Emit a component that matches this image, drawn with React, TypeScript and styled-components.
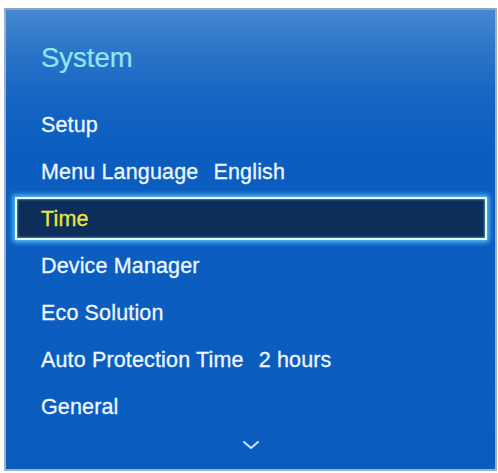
import React from "react";
import styled, { createGlobalStyle } from "styled-components";

const Global = createGlobalStyle`
  html, body { margin: 0; padding: 0; background: #ffffff; }
  body { font-family: "Liberation Sans", Arial, sans-serif; }
`;

const Page = styled.div`
  padding: 8px 1px 2px 4px;
`;

const Panel = styled.div`
  box-sizing: border-box;
  width: 493px;
  height: 463px;
  border: 2px solid #9fb0c4;
  border-top-color: #8ea4bc;
  background: linear-gradient(
    to bottom,
    #4787cf 0px,
    #2a73c8 45px,
    #1363c2 95px,
    #0b5ec0 140px,
    #0a5dbf 100%
  );
  display: flex;
  flex-direction: column;
`;

const Title = styled.div`
  padding: 32px 0 0 35px;
  height: 61px;
  font-size: 27.5px;
  line-height: 32px;
  color: #90e6f2;
  -webkit-text-stroke: 0.2px #90e6f2;
`;

const List = styled.div`
  display: flex;
  flex-direction: column;
  gap: 4px;
  padding: 0 8px 0 9px;
`;

const Row = styled.div<{ $active?: boolean }>`
  box-sizing: border-box;
  height: 43px;
  border: 2px solid ${(p) => (p.$active ? "#e6fbff" : "transparent")};
  background: ${(p) => (p.$active ? "#0d2d5b" : "transparent")};
  box-shadow: ${(p) =>
    p.$active
      ? "0 0 5px 2px rgba(110, 215, 255, 0.85), inset 0 0 2px 1px rgba(110, 215, 255, 0.5)"
      : "none"};
  padding: 1px 0 0 24px;
  font-size: 21.5px;
  letter-spacing: 0.15px;
  line-height: 38px;
  color: ${(p) => (p.$active ? "#ebe63c" : "#eef6ff")};
  -webkit-text-stroke: 0.3px ${(p) => (p.$active ? "#ebe63c" : "#eef6ff")};
  white-space: nowrap;
`;

const Value = styled.span`
  margin-left: 9px;
`;

const More = styled.div`
  display: flex;
  justify-content: center;
  padding-top: 12px;
  padding-left: 1px;
`;

const items: { label: string; value?: string; active?: boolean }[] = [
  { label: "Setup" },
  { label: "Menu Language", value: "English" },
  { label: "Time", active: true },
  { label: "Device Manager" },
  { label: "Eco Solution" },
  { label: "Auto Protection Time", value: "2 hours" },
  { label: "General" },
];

export default function App() {
  return (
    <>
      <Global />
      <Page>
        <Panel>
          <Title>System</Title>
          <List>
            {items.map((it) => (
              <Row key={it.label} $active={it.active}>
                {it.label}
                {it.value && <Value> {it.value}</Value>}
              </Row>
            ))}
          </List>
          <More>
            <svg width="20" height="10" viewBox="0 0 20 10">
              <path
                d="M3 2 L10 8 L17 2"
                fill="none"
                stroke="#c8e6fb"
                strokeWidth="2"
                strokeLinecap="round"
                strokeLinejoin="round"
              />
            </svg>
          </More>
        </Panel>
      </Page>
    </>
  );
}
